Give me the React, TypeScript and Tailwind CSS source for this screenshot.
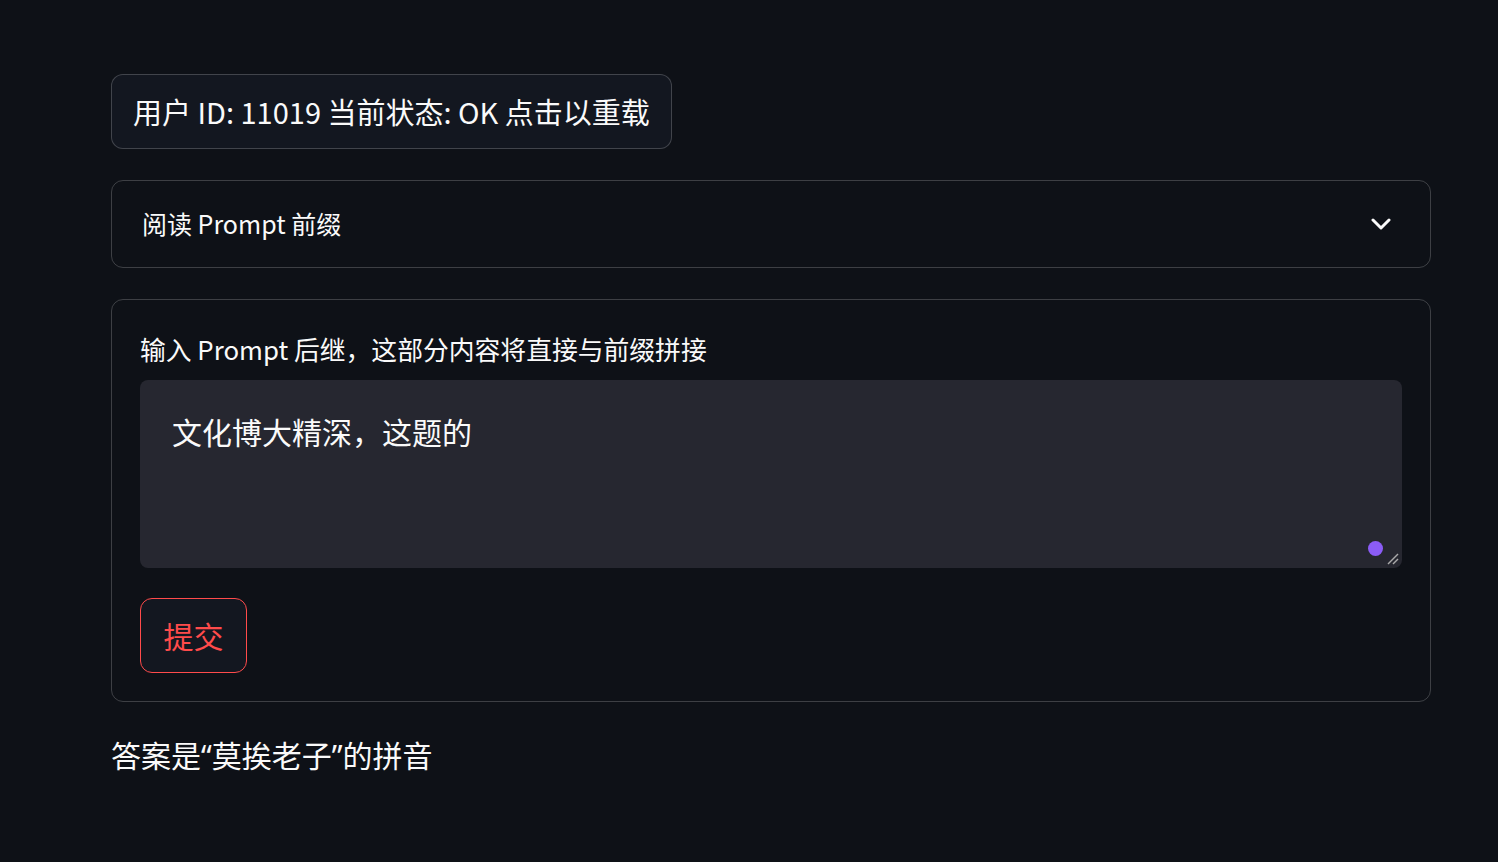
export default function App() {
  return (
    <div className="min-h-[862px] w-full bg-[#0e1117] text-[#fafafa] font-['Noto_Sans_CJK_SC',sans-serif]">
      <div className="ml-[111px] flex w-[1320px] flex-col pt-[74px]">
        <div>
          <button className="h-[75px] rounded-xl border border-[rgba(250,250,250,0.2)] bg-[#131720] px-[21px] text-[29px] leading-none text-[#fafafa]">
            用户 ID: 11019 当前状态: OK 点击以重载
          </button>
        </div>

        <div className="mt-[31px] flex h-[88px] items-center justify-between rounded-xl border border-[rgba(250,250,250,0.2)] pl-[30px] pr-[39px]">
          <span className="text-[25px]">阅读 Prompt 前缀</span>
          <svg width="20" height="12" viewBox="0 0 20 12" fill="none">
            <polyline points="2,2 10,10 18,2" stroke="#fafafa" strokeWidth="3" strokeLinecap="round" strokeLinejoin="round" />
          </svg>
        </div>

        <form className="mt-[31px] flex flex-col rounded-xl border border-[rgba(250,250,250,0.2)] px-[28px] pt-[31px] pb-[28px]">
          <label className="text-[25.8px] leading-[36px]">
            输入 Prompt 后继，这部分内容将直接与前缀拼接
          </label>
          <div className="relative mt-[13px] h-[188px] rounded-lg bg-[#262730]">
            <div className="px-[32px] pt-[31px] text-[30px] leading-[40px]">
              文化博大精深，这题的
            </div>
            <span className="absolute right-[19px] bottom-[12px] h-[15px] w-[15px] rounded-full bg-[#8b5cf6]" />
            <svg className="absolute right-[2px] bottom-[2px]" width="14" height="14" viewBox="0 0 14 14">
              <line x1="2" y1="12" x2="12" y2="2" stroke="#aaaaaa" strokeWidth="1.5" />
              <line x1="7" y1="12" x2="12" y2="7" stroke="#aaaaaa" strokeWidth="1.5" />
            </svg>
          </div>
          <div className="mt-[30px]">
            <button type="button" className="h-[75px] w-[107px] rounded-xl border border-[#ff4b4b] bg-[#131720] text-[30px] text-[#ff4b4b]">
              提交
            </button>
          </div>
        </form>

        <p className="mt-[30px] text-[30px] leading-[44px]">
          答案是<span className="font-['Noto_Sans',sans-serif]">“</span>莫挨老子<span className="font-['Noto_Sans',sans-serif]">”</span>的拼音
        </p>
      </div>
    </div>
  );
}
